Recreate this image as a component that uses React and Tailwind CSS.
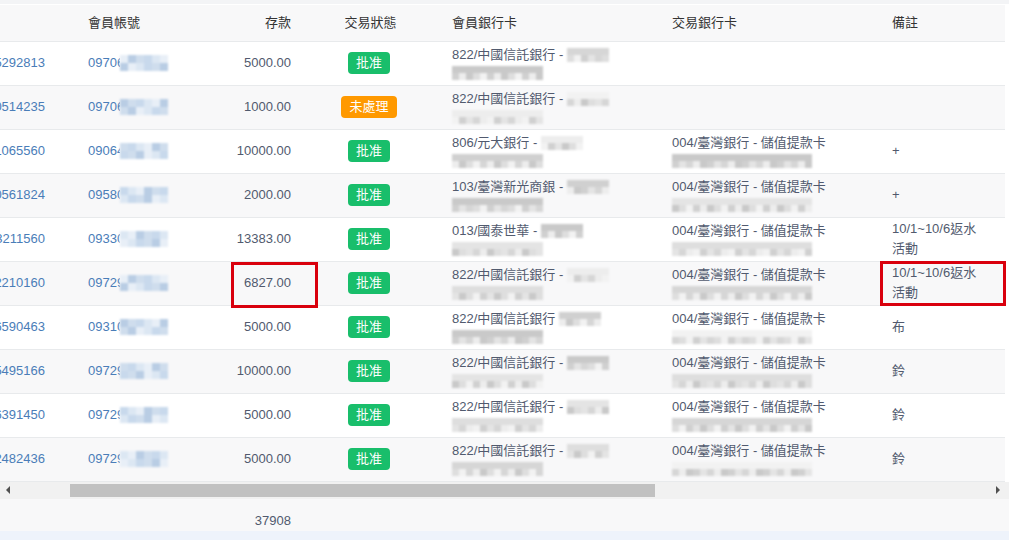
import React from 'react';

const rows = [
  { id: '1012505292813', acct: '09706', amt: '5000.00', status: 'ok', bank: '822/中國信託銀行 - ', trade: false, note: '' },
  { id: '1012500514235', acct: '09706', amt: '1000.00', status: 'wait', bank: '822/中國信託銀行 - ', trade: false, note: '' },
  { id: '1012501065560', acct: '09064', amt: '10000.00', status: 'ok', bank: '806/元大銀行 - ', trade: true, note: '+' },
  { id: '1012500561824', acct: '09580', amt: '2000.00', status: 'ok', bank: '103/臺灣新光商銀 - ', trade: true, note: '+' },
  { id: '1012503211560', acct: '0933', amt: '13383.00', status: 'ok', bank: '013/國泰世華 - ', trade: true, note: 'event' },
  { id: '1012502210160', acct: '09729', amt: '6827.00', status: 'ok', bank: '822/中國信託銀行 - ', trade: true, note: 'event' },
  { id: '1012506590463', acct: '0931', amt: '5000.00', status: 'ok', bank: '822/中國信託銀行 ', trade: true, note: '布' },
  { id: '1012505495166', acct: '09729', amt: '10000.00', status: 'ok', bank: '822/中國信託銀行 - ', trade: true, note: '鈴' },
  { id: '1012506391450', acct: '09729', amt: '5000.00', status: 'ok', bank: '822/中國信託銀行 - ', trade: true, note: '鈴' },
  { id: '1012502482436', acct: '09729', amt: '5000.00', status: 'ok', bank: '822/中國信託銀行 - ', trade: true, note: '鈴' },
];

const grays = ['bg-[#e4e4e4]', 'bg-[#d6d6d6]', 'bg-[#ededed]', 'bg-[#c9c9c9]', 'bg-[#dedede]', 'bg-[#f2f2f2]', 'bg-[#d0d0d0]'];
const blues = ['bg-[#c8d9ec]', 'bg-[#b9cde4]', 'bg-[#dce7f3]', 'bg-[#cfdded]', 'bg-[#e8eff7]'];

// pixelated "redacted" block
function Mosaic({ cols, lines = 2, size = 7, seed = 1, blue = false }) {
  const palette = blue ? blues : grays;
  const cells = [];
  for (let r = 0; r < lines; r++) {
    for (let c = 0; c < cols; c++) {
      const k = (seed * 31 + r * 17 + c * 7 + ((c * r + seed) % 5)) % palette.length;
      cells.push(<span key={r + '-' + c} className={palette[k]} style={{ width: size, height: size }} />);
    }
  }
  return (
    <span className="inline-grid align-middle blur-[0.8px]" style={{ gridTemplateColumns: `repeat(${cols}, ${size}px)` }}>
      {cells}
    </span>
  );
}

function Badge({ status }) {
  if (status === 'wait') {
    return <span className="inline-block rounded-[4px] bg-[#ff9900] px-[8px] leading-[22px] text-white">未處理</span>;
  }
  return <span className="inline-block rounded-[4px] bg-[#19be6b] px-[8px] leading-[22px] text-white">批准</span>;
}

function Note({ note }) {
  if (note === 'event') {
    return (
      <>
        10/1~10/6返水
        <br />
        活動
      </>
    );
  }
  return note;
}

export default function App() {
  return (
    <div
      className="relative h-[540px] w-[1009px] overflow-hidden bg-white text-[13px] text-[#515a6e]"
      style={{ fontFamily: '"Liberation Sans", "Noto Sans CJK TC", sans-serif' }}
    >
      <div className="h-[5px] border-b border-white bg-[#f3f4f6]" />
      <table className="w-[1005px] table-fixed border-collapse">
        <colgroup>
          <col className="w-[70px]" />
          <col className="w-[130px]" />
          <col className="w-[109px]" />
          <col className="w-[125px]" />
          <col className="w-[220px]" />
          <col className="w-[220px]" />
          <col className="w-[131px]" />
        </colgroup>
        <thead>
          <tr className="h-[36px] border-b border-[#e8eaec] bg-[#f8f8f9] text-[#333]">
            <th className="font-normal" />
            <th className="px-[18px] text-left font-normal">會員帳號</th>
            <th className="px-[18px] text-right font-normal">存款</th>
            <th className="pr-[2px] text-center font-normal">交易狀態</th>
            <th className="px-[18px] text-left font-normal">會員銀行卡</th>
            <th className="px-[18px] text-left font-normal">交易銀行卡</th>
            <th className="px-[18px] text-left font-normal">備註</th>
          </tr>
        </thead>
        <tbody>
          {rows.map((r, i) => (
            <tr key={r.id} className={'h-[44px] border-b border-[#e8eaec] ' + (i % 2 ? 'bg-[#f8f8f9]' : 'bg-white')}>
              <td className="overflow-hidden text-[#4a7db8]">
                <div className="flex justify-end whitespace-nowrap pr-[25px]">{r.id}</div>
              </td>
              <td className="px-[18px] text-[#4a7db8]">
                <div className="flex items-center whitespace-nowrap">
                  <span className="w-[32px] overflow-hidden">{r.acct}0</span>
                  <Mosaic cols={6} lines={2} size={8} seed={i + 2} blue />
                </div>
              </td>
              <td className="px-[18px] text-right">{r.amt}</td>
              <td className="pr-[5px] text-center">
                <Badge status={r.status} />
              </td>
              <td className="px-[18px] leading-[17px]">
                <div className="whitespace-nowrap">
                  {r.bank}
                  <Mosaic cols={6} lines={2} size={7} seed={i + 5} />
                </div>
                <div className="mt-[1px]">
                  <Mosaic cols={13} lines={2} size={7} seed={i + 9} />
                </div>
              </td>
              <td className="px-[18px] leading-[17px]">
                {r.trade && (
                  <>
                    <div className="whitespace-nowrap">004/臺灣銀行 - 儲值提款卡</div>
                    <div className="mt-[1px]">
                      <Mosaic cols={20} lines={2} size={7} seed={i + 13} />
                    </div>
                  </>
                )}
              </td>
              <td className="px-[18px] leading-[20px]">
                <Note note={r.note} />
              </td>
            </tr>
          ))}
        </tbody>
      </table>

      {/* horizontal scrollbar */}
      <div className="flex h-[17px] items-center bg-[#f1f1f1]">
        <div className="flex w-[16px] justify-center">
          <span className="h-0 w-0 border-y-[4px] border-r-[4px] border-y-transparent border-r-[#505050]" />
        </div>
        <div className="ml-[54px] h-[13px] w-[585px] bg-[#c1c1c1]" />
        <div className="flex-1" />
        <div className="flex w-[22px] justify-center">
          <span className="h-0 w-0 border-y-[4px] border-l-[4px] border-y-transparent border-l-[#505050]" />
        </div>
      </div>

      {/* summary row */}
      <div className="flex h-[32px] items-end bg-[#f8f8f9] pb-[0px]">
        <div className="w-[291px] text-right leading-[20px]">37908</div>
      </div>
      <div className="h-[10px] bg-[#eef3fb]" />

      {/* annotation boxes */}
      <div className="absolute left-[231px] top-[262px] h-[46px] w-[87px] border-[3px] border-[#d9000d]" />
      <div className="absolute left-[880px] top-[261px] h-[45px] w-[126px] border-[3px] border-[#d9000d]" />
    </div>
  );
}
